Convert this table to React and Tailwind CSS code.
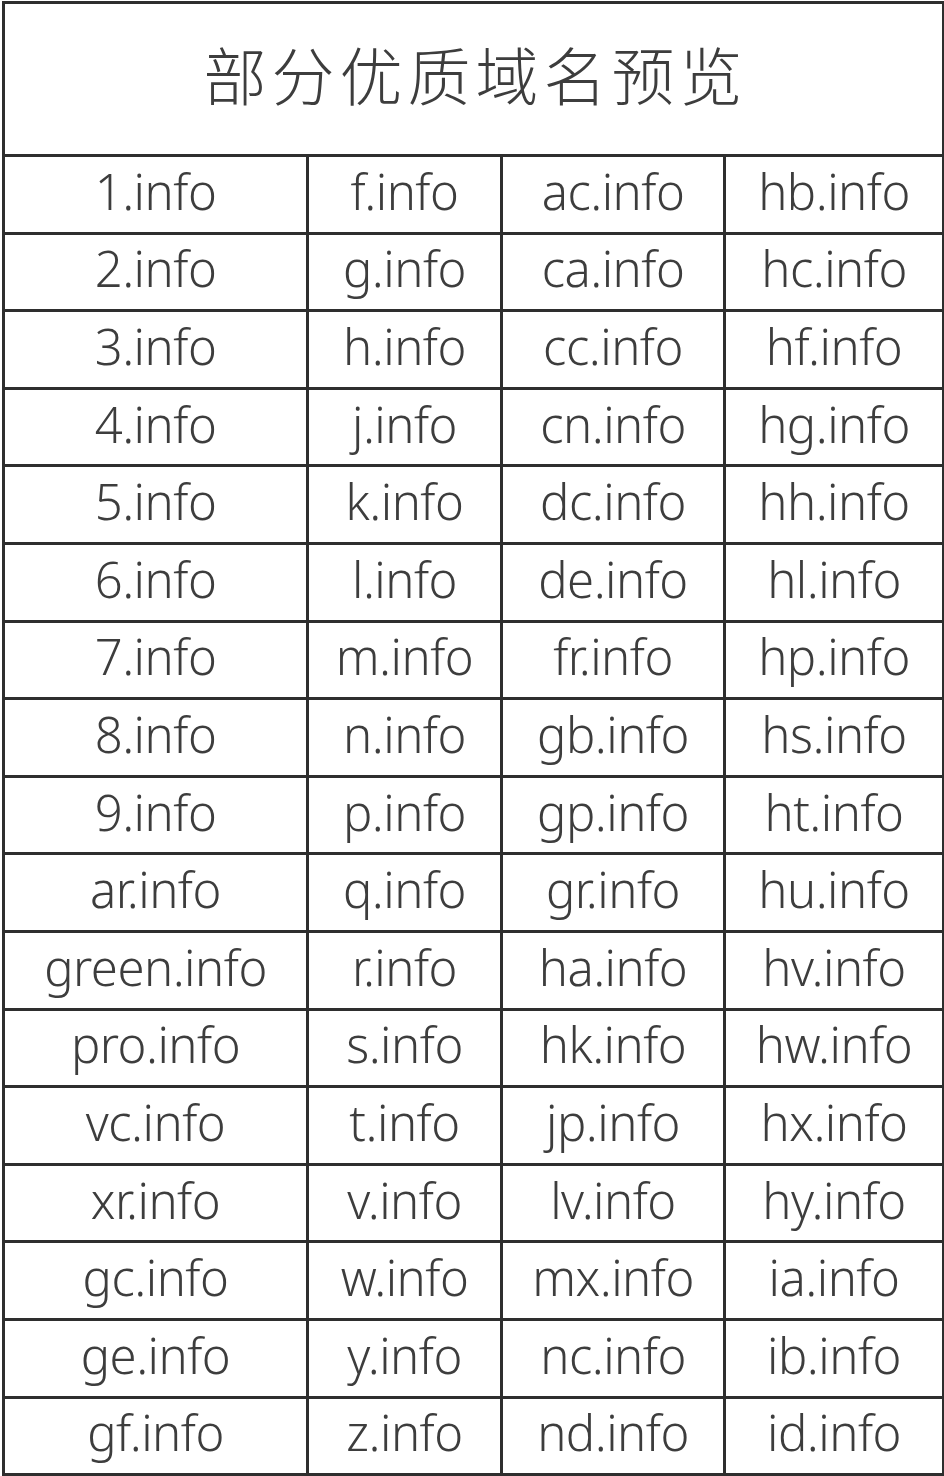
import React from "react";

const rows = [
  ["1.info", "f.info", "ac.info", "hb.info"],
  ["2.info", "g.info", "ca.info", "hc.info"],
  ["3.info", "h.info", "cc.info", "hf.info"],
  ["4.info", "j.info", "cn.info", "hg.info"],
  ["5.info", "k.info", "dc.info", "hh.info"],
  ["6.info", "l.info", "de.info", "hl.info"],
  ["7.info", "m.info", "fr.info", "hp.info"],
  ["8.info", "n.info", "gb.info", "hs.info"],
  ["9.info", "p.info", "gp.info", "ht.info"],
  ["ar.info", "q.info", "gr.info", "hu.info"],
  ["green.info", "r.info", "ha.info", "hv.info"],
  ["pro.info", "s.info", "hk.info", "hw.info"],
  ["vc.info", "t.info", "jp.info", "hx.info"],
  ["xr.info", "v.info", "lv.info", "hy.info"],
  ["gc.info", "w.info", "mx.info", "ia.info"],
  ["ge.info", "y.info", "nc.info", "ib.info"],
  ["gf.info", "z.info", "nd.info", "id.info"],
];

const App = () => {
  return (
    <div className="w-[944px] h-[1476px] bg-white pt-[1px] pl-[2px]">
      <table
        className="table-fixed border-collapse w-[940px] text-[#3d3d3d]"
        style={{ fontFamily: '"Noto Sans", "Noto Sans CJK SC", sans-serif' }}
      >
        <colgroup>
          <col className="w-[304px]" />
          <col className="w-[194px]" />
          <col className="w-[223px]" />
          <col className="w-[219px]" />
        </colgroup>
        <thead>
          <tr>
            <th
              colSpan={4}
              className="h-[153px] border-[3px] border-[#2e2e2e] text-[63px] font-light tracking-[5px] pb-[12px] pl-[4px]"
              style={{ fontFamily: '"Noto Sans CJK SC", sans-serif' }}
            >
              部分优质域名预览
            </th>
          </tr>
        </thead>
        <tbody>
          {rows.map((row, i) => (
            <tr key={i} className="h-[77.6px]">
              {row.map((name) => (
                <td
                  key={name}
                  className="border-[3px] border-[#2e2e2e] text-center text-[49px] font-light leading-none tracking-[-0.5px] pb-[6px]"
                >
                  {name}
                </td>
              ))}
            </tr>
          ))}
        </tbody>
      </table>
    </div>
  );
};

export default App;
